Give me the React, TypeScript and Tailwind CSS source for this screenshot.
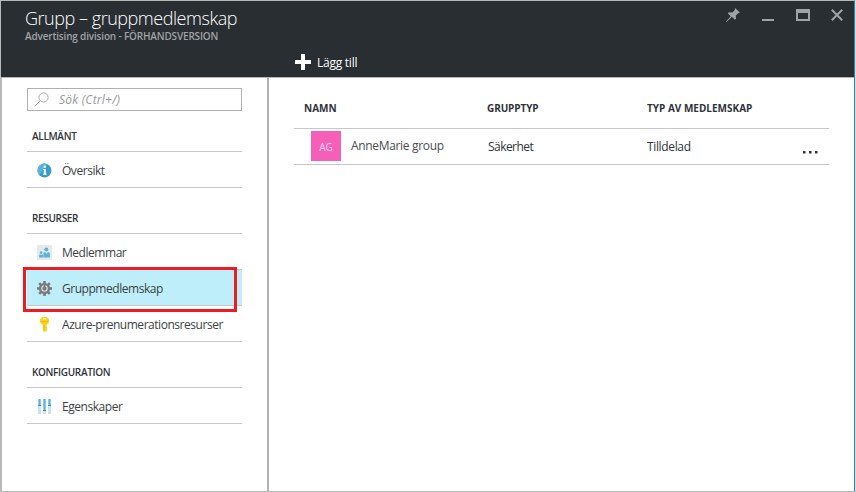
import type { ReactNode } from 'react';

function InfoIcon() {
  return (
    <svg width="15" height="15" viewBox="0 0 15 15">
      <circle cx="7.5" cy="7.5" r="6.9" fill="#3a9bcb" />
      <path d="M2.2 12A6.9 6.9 0 0 1 10.5 1.3Z" fill="#59b4d9" />
      <circle cx="7.8" cy="3.7" r="1.2" fill="#fff" />
      <path d="M6 6h2.8v4.8h.9v1H5.9v-1h.9V7H6z" fill="#fff" />
    </svg>
  );
}

function MembersIcon() {
  return (
    <svg width="15" height="15" viewBox="0 0 15 15">
      <path d="M0 0h15v15H0z" fill="#e6e8ea" />
      <g fill="#59b4d9">
        <circle cx="9.3" cy="4.5" r="2" />
        <path d="M6.3 12.5V9q0-2 1.600-2l1.500 1.800L11 7q1.900 0 1.900 2v3.500z" />
        <circle cx="4.100" cy="7.600" r="1.300" />
        <path d="M2.200 12.500v-2q0-1.300 1-1.300l1 1 1-1q.8 0 .8 1.300v2z" />
      </g>
    </svg>
  );
}

function GearIcon() {
  return (
    <svg width="15" height="15" viewBox="0 0 15 15">
      <g fill="#7a7a7a">
        <path d="M6.200 0h2.600v15H6.200z" />
        <path d="M6.200 0h2.600v15H6.200z" transform="rotate(45 7.500 7.500)" />
        <path d="M6.200 0h2.600v15H6.200z" transform="rotate(90 7.500 7.500)" />
        <path d="M6.200 0h2.600v15H6.200z" transform="rotate(135 7.500 7.500)" />
        <circle cx="7.500" cy="7.500" r="5.600" />
      </g>
      <circle cx="7.500" cy="7.500" r="2.700" fill="#7a7a7a" stroke="#d9e6ea" strokeWidth="1.100" />
      <path d="M6.800 3.800h1.400v3.400H6.800z" fill="#7a7a7a" />
    </svg>
  );
}

function KeyIcon() {
  return (
    <svg width="15" height="15" viewBox="0 0 15 15">
      <path
        d="M5.500 0h4l2.500 2.200v3.200L9.500 7.800v1.700l.8.900-.8.900.8 1-.8.900v.7L7.500 15 5.800 13.800V7.800L3 5.400V2.200z"
        fill="#fcd116"
      />
      <path d="M6.100 1.300h2.800v1.100H6.100z" fill="#fff" />
      <path d="M4 4.500h7" stroke="#e3b500" strokeWidth=".8" />
      <path d="M7.200 8v5.500" stroke="#e8bd12" strokeWidth=".8" />
    </svg>
  );
}

function SlidersIcon() {
  return (
    <svg width="15" height="15" viewBox="0 0 15 15">
      <path d="M1 0h3v15H1zM6 0h3v15H6zM11 0h3v15h-3z" fill="#c5e4f0" />
      <path d="M1.500 0h2v6h-2zM6.500 0h2v11h-2zM11.500 0h2v6h-2z" fill="#59b4d9" />
      <path d="M1 6h3v1H1zM6 11h3v1H6zM11 6h3v1h-3z" fill="#777b7e" />
    </svg>
  );
}

function MenuItem({ icon, children, selected = false }: { icon: ReactNode; children: ReactNode; selected?: boolean }) {
  return (
    <li
      className={`flex h-9 items-center border-b border-[#c8c8c8] pl-[10px] pt-[2px] text-[12px] tracking-[-0.46px] text-[#3c3f44] ${
        selected ? 'bg-[#bfeefb]' : ''
      }`}
    >
      <span className="mr-[10px] shrink-0">{icon}</span>
      <span className="whitespace-nowrap">{children}</span>
    </li>
  );
}

function SectionTitle({ children }: { children: ReactNode }) {
  return (
    <h2 className="flex h-[30px] items-center pl-[5px] text-[10px] font-semibold tracking-[-0.33px] text-[#303338]">
      {children}
    </h2>
  );
}

function Header() {
  return (
    <header className="-ml-px flex h-[77px] shrink-0 justify-between border-b border-[#b4b6b7] bg-[#292e32]">
      <div className="flex w-[294px] shrink-0 flex-col pl-[24px] pt-[5px]">
        <h1 className="h-6 whitespace-nowrap text-[18px] font-light leading-6 tracking-[-0.46px] text-white">
          Grupp – gruppmedlemskap
        </h1>
        <p className="h-3 whitespace-nowrap text-[10px] font-semibold leading-3 tracking-[-0.17px] text-[#a0a3a5]">
          Advertising division - FÖRHANDSVERSION
        </p>
      </div>
      <button className="mr-auto mt-[53px] flex h-4 items-center gap-[6px] text-[12px] tracking-[-0.25px] text-white">
        <svg width="16" height="16" viewBox="0 0 16 16">
          <path d="M6 0h4v6h6v4h-6v6H6v-6H0V6h6z" fill="#fff" />
        </svg>
        <span className="whitespace-nowrap pt-[2px]">Lägg till</span>
      </button>
      <div className="mr-[11px] mt-[7px] flex h-[15px] items-start">
        <svg width="14" height="14" viewBox="0 0 14 14" className="mr-[22px]">
          <path
            d="M9 0l5 4.600-1.500.3-2.700 2.600.2 3.500-1.300.5-2.800-2.700L.5 14 0 13.500l4.700-5.200L2 5.600l.7-1.300 3.700.1L8.800 2z"
            fill="#a1a4a6"
          />
        </svg>
        <svg width="12" height="2" viewBox="0 0 12 2" className="mr-[22px] mt-[11px]">
          <path d="M0 0h12v2H0z" fill="#a1a4a6" />
        </svg>
        <svg width="14" height="12" viewBox="0 0 14 12" className="mr-[21px] mt-px">
          <path d="M0 0h14v12H0zM2 4v6h10V4z" fillRule="evenodd" fill="#a1a4a6" />
        </svg>
        <svg width="12" height="12" viewBox="0 0 12 12" className="mt-px">
          <path d="M.8.8l10.400 10.400M11.200.8L.8 11.200" stroke="#a1a4a6" strokeWidth="2" />
        </svg>
      </div>
    </header>
  );
}

function Sidebar() {
  return (
    <nav className="w-[267px] shrink-0 border-r-2 border-[#b0b1b2] pl-[25px] pt-[10px]">
      <div className="w-[215px]">
        <div className="flex h-[23px] items-center border border-[#b0b1b2] pl-[6px] text-[12px] italic tracking-[0.23px] text-[#97999c]">
          <svg width="15" height="15" viewBox="0 0 15 15" className="mr-[10px]" fill="none" stroke="#aaaaae">
            <circle cx="9.500" cy="5.500" r="4.600" />
            <path d="M6.200 8.800L.5 14.500" />
          </svg>
          <span className="whitespace-nowrap pt-px">Sök (Ctrl+/)</span>
        </div>
        <div className="mt-[10px]">
          <SectionTitle>ALLMÄNT</SectionTitle>
          <ul className="border-t border-[#c8c8c8]">
            <MenuItem icon={<InfoIcon />}>Översikt</MenuItem>
          </ul>
        </div>
        <div className="mt-[15px]">
          <SectionTitle>RESURSER</SectionTitle>
          <ul className="relative border-t border-[#c8c8c8]">
            <MenuItem icon={<MembersIcon />}>Medlemmar</MenuItem>
            <MenuItem icon={<GearIcon />} selected>
              Gruppmedlemskap
            </MenuItem>
            <MenuItem icon={<KeyIcon />}>Azure-prenumerationsresurser</MenuItem>
            <li aria-hidden className="absolute -left-1 top-[33px] h-[45px] w-[214px] border-3 border-[#ed1c24]" />
          </ul>
        </div>
        <div className="mt-[15px]">
          <SectionTitle>KONFIGURATION</SectionTitle>
          <ul className="border-t border-[#c8c8c8]">
            <MenuItem icon={<SlidersIcon />}>Egenskaper</MenuItem>
          </ul>
        </div>
      </div>
    </nav>
  );
}

function GroupTable() {
  return (
    <main className="flex-1 pl-[25px] pr-[25px] pt-[10px] text-[#303338]">
      <div className="grid h-[41px] grid-cols-[193px_160px_1fr] items-center border-b border-[#c8c8c8] text-[10px] font-bold">
        <span className="pl-[10px]">NAMN</span>
        <span className="tracking-[-0.1px]">GRUPPTYP</span>
        <span>TYP AV MEDLEMSKAP</span>
      </div>
      <div className="grid h-9 grid-cols-[194px_159px_1fr_28px] items-center border-b border-[#c8c8c8] text-[12px]">
        <div className="flex h-[35px] items-start pl-[17px] pt-[2px]">
          <span className="mr-[10px] flex size-[30px] items-center justify-center bg-[#f55fb7] pt-[2px] text-[10px] text-[#ffd9ef]">
            AG
          </span>
          <span className="whitespace-nowrap pt-[6px] leading-[18px] tracking-[-0.33px] text-[#494c51]">
            AnneMarie group
          </span>
        </div>
        <span className="pt-px tracking-[-0.55px]">Säkerhet</span>
        <span className="pt-px tracking-[-0.35px]">Tilldelad</span>
        <svg width="15" height="3" viewBox="0 0 15 3" className="mt-[11px] ml-[2px]">
          <path d="M0 0h2.500v2.500H0zM6 0h2.500v2.500H6zM12 0h2.500v2.500H12z" fill="#303338" />
        </svg>
      </div>
    </main>
  );
}

export default function App() {
  return (
    <div className="flex h-[492px] w-[856px] border-r border-[#d5dcdf] bg-white font-['Open_Sans','Noto_Sans',sans-serif]">
      <div className="flex w-[855px] flex-col border-y border-l-2 border-r border-t-[#b4bab8] border-b-[#b8b9ba] border-l-[#b8b9ba] border-r-[#2e86ad]">
        <Header />
        <div className="flex flex-1">
          <Sidebar />
          <GroupTable />
        </div>
      </div>
    </div>
  );
}
